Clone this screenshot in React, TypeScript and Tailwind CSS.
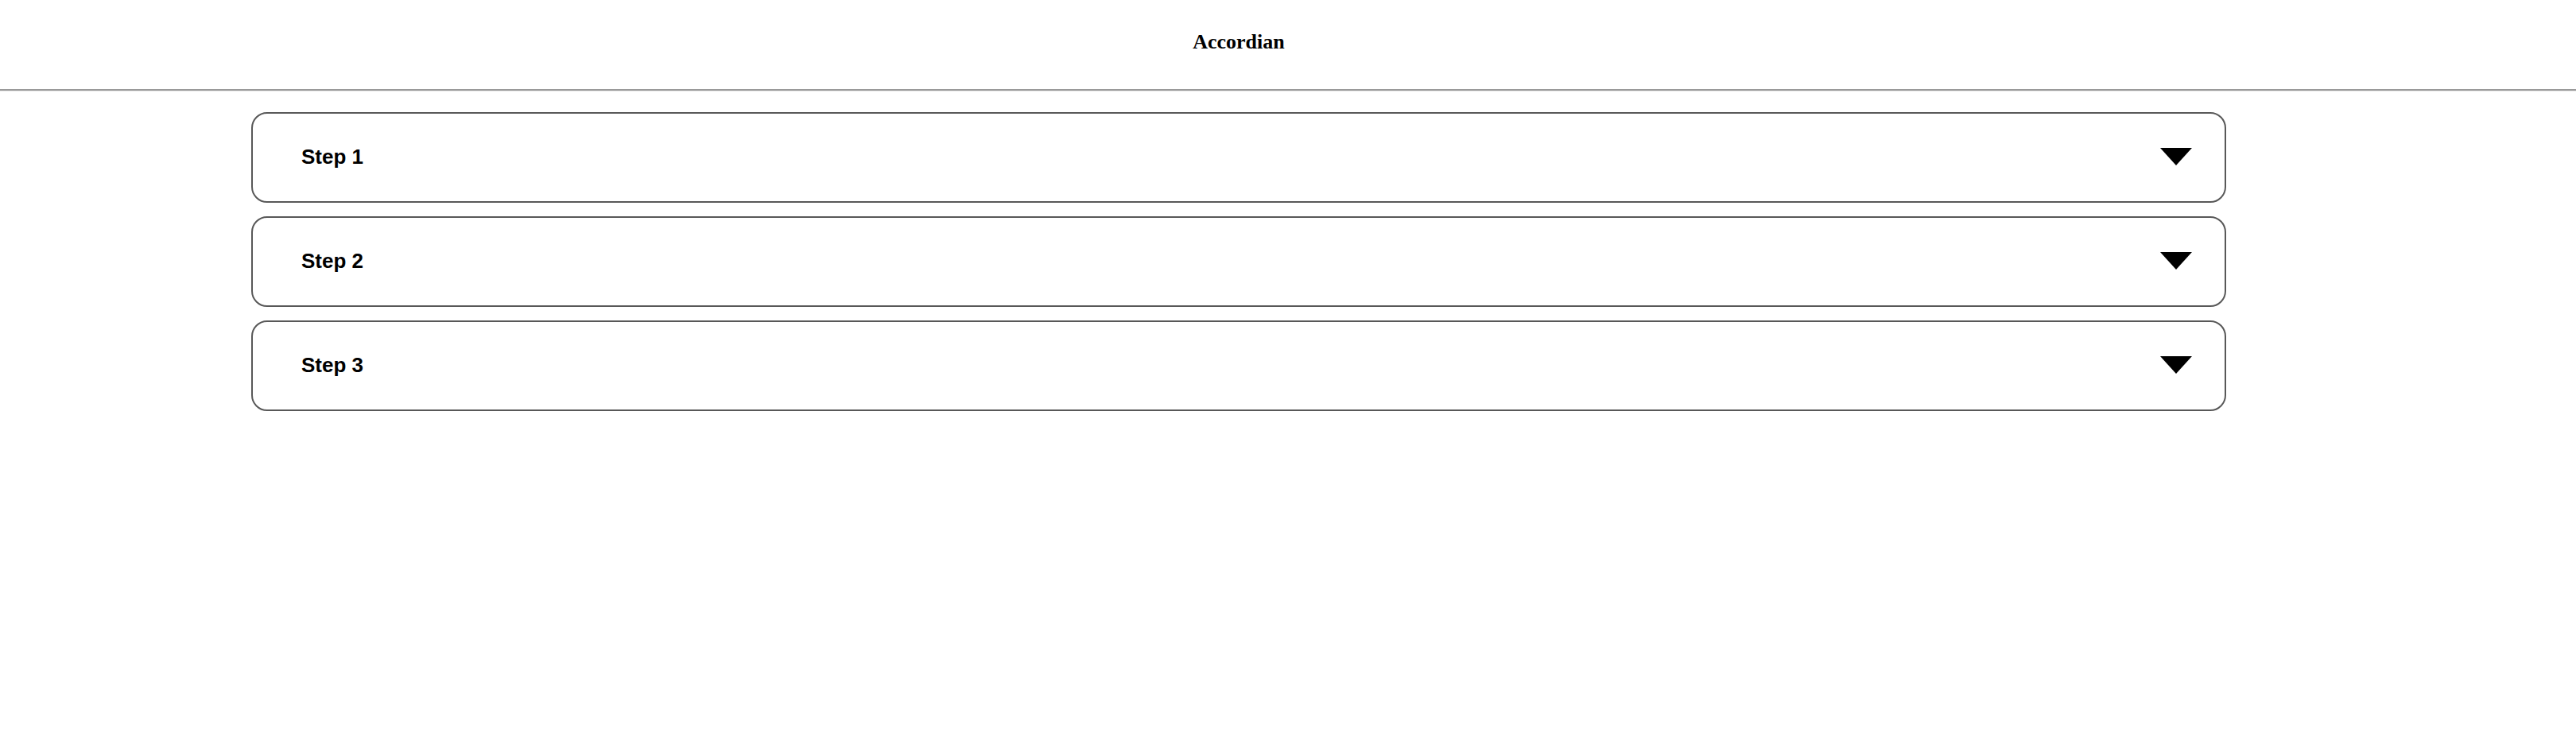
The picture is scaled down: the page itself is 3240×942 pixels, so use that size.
const steps = ['Step 1', 'Step 2', 'Step 3']

function Caret() {
  return (
    <svg width="40" height="22" viewBox="0 0 40 22" className="block">
      <polygon points="0,0 40,0 20,22" fill="#000" />
    </svg>
  )
}

function AccordionItem({ title }: { title: string }) {
  return (
    <div className="flex h-[114px] w-[2484px] items-center justify-between rounded-[20px] border-2 border-[#585858] bg-white pb-[2px] pl-[61px] pr-[41px]">
      <span className="font-['Liberation_Sans',Arial,sans-serif] text-[26px] font-bold text-black">{title}</span>
      <Caret />
    </div>
  )
}

export default function App() {
  return (
    <div className="min-h-screen w-full bg-white">
      <div className="flex h-[112px] w-[3116px] justify-center pt-[38px]">
        <h1 className="font-['Liberation_Serif','Times_New_Roman',serif] text-[26px] leading-[30px] font-bold text-black">Accordian</h1>
      </div>
      <div className="h-[2px] w-full bg-[#999999]" />
      <div className="h-[1px] w-full bg-[#e8e8e8]" />
      <div className="flex flex-col gap-[17px] pl-[316px] pt-[26px]">
        {steps.map((s) => (
          <AccordionItem key={s} title={s} />
        ))}
      </div>
    </div>
  )
}
